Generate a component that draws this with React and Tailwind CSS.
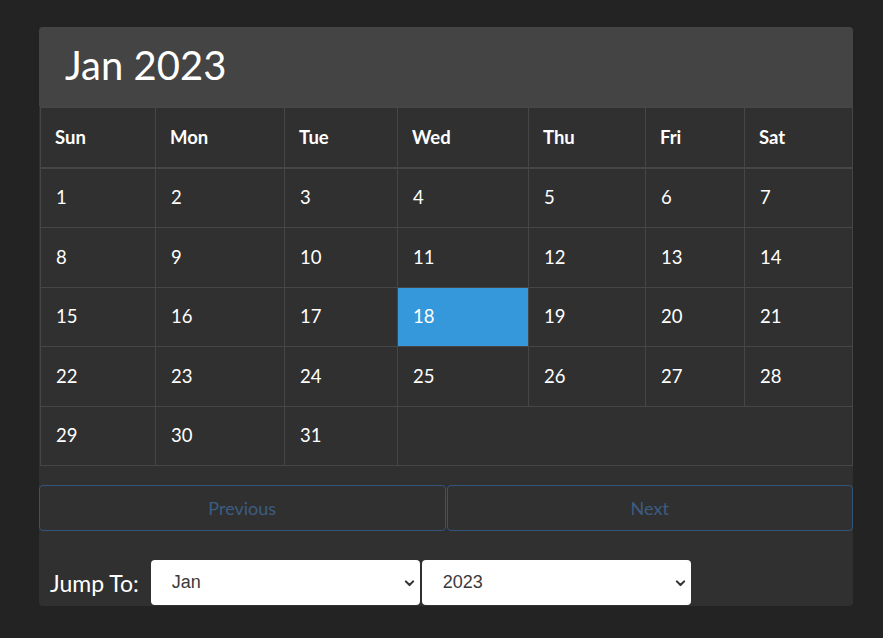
import { useState } from 'react';

const MONTHS = ['Jan', 'Feb', 'Mar', 'Apr', 'May', 'Jun', 'Jul', 'Aug', 'Sep', 'Oct', 'Nov', 'Dec'];
const DAYS = ['Sun', 'Mon', 'Tue', 'Wed', 'Thu', 'Fri', 'Sat'];
const WIDTHS = ['w-[115px]', 'w-[129px]', 'w-[113px]', 'w-[131px]', 'w-[117px]', 'w-[99px]', 'w-[108px]'];

function buildWeeks(month, year) {
  const first = new Date(year, month, 1).getDay();
  const total = new Date(year, month + 1, 0).getDate();
  const weeks = [];
  let week = Array(first).fill(null);
  for (let d = 1; d <= total; d++) {
    week.push(d);
    if (week.length === 7) {
      weeks.push(week);
      week = [];
    }
  }
  if (week.length) weeks.push(week);
  return weeks;
}

function Chevron() {
  return (
    <svg className="pointer-events-none absolute right-[4px] top-1/2 -translate-y-1/2" width="13" height="13" viewBox="0 0 16 16">
      <path d="M3.5 6l4.5 4.5 4.5-4.5" fill="none" stroke="#333" strokeWidth="2.6" strokeLinecap="round" strokeLinejoin="round" />
    </svg>
  );
}

export default function App() {
  const [month, setMonth] = useState(0);
  const [year, setYear] = useState(2023);
  const today = 18;
  const weeks = buildWeeks(month, year);

  return (
    <div className="min-h-[638px] bg-[#232323] pt-[27px] pl-[39px]" style={{ fontFamily: 'Lato, "Open Sans", sans-serif' }}>
      <div className="w-[814px] rounded-[4px] bg-[#303030] text-white">
        <div className="h-[79px] rounded-t-[4px] bg-[#444444] pl-[26px] pt-[14px] text-[40px] leading-[48px]">
          {MONTHS[month]} {year}
        </div>
        <div className="px-[1px]">
          <table className="w-[812px] border-collapse table-fixed text-[18.5px]">
            <thead>
              <tr className="h-[61px] border-y-2 border-[#464646]">
                {DAYS.map((d, i) => (
                  <th key={d} className={`${WIDTHS[i]} border-x border-[#464646] pl-[14px] text-left font-bold`}>{d}</th>
                ))}
              </tr>
            </thead>
            <tbody>
              {weeks.map((w, wi) => (
                <tr key={wi} className="h-[59.6px] border-b border-[#464646]">
                  {w.map((d, di) => (
                    <td
                      key={di}
                      className={`border-x border-[#464646] pl-[15px] ${d === today ? 'bg-[#3498db]' : ''}`}
                    >
                      {d}
                    </td>
                  ))}
                  {w.length < 7 && <td colSpan={7 - w.length} className="border-r border-[#464646]" />}
                </tr>
              ))}
            </tbody>
          </table>
        </div>
        <div className="mt-[19px] flex gap-[1px]">
          <button className="h-[46px] flex-1 rounded-[4px] border border-[#34557a] text-[18px] text-[#3c5d82]">Previous</button>
          <button className="h-[46px] flex-1 rounded-[4px] border border-[#34557a] text-[18px] text-[#3c5d82]">Next</button>
        </div>
        <div className="mt-[29px] flex items-center pb-[1px] pl-[11px]">
          <span className="mr-[12px] text-[23px]">Jump To:</span>
          <div className="relative w-[269px]">
            <select
              value={month}
              onChange={(e) => setMonth(Number(e.target.value))}
              className="h-[45px] w-full appearance-none rounded-[4px] bg-white pl-[21px] text-[18px] text-[#3a3a3a]"
              style={{ fontFamily: '"Liberation Sans", Arial, sans-serif' }}
            >
              {MONTHS.map((m, i) => (
                <option key={m} value={i}>{m}</option>
              ))}
            </select>
            <Chevron />
          </div>
          <div className="relative ml-[2px] w-[269px]">
            <select
              value={year}
              onChange={(e) => setYear(Number(e.target.value))}
              className="h-[45px] w-full appearance-none rounded-[4px] bg-white pl-[21px] text-[18px] text-[#3a3a3a]"
              style={{ fontFamily: '"Liberation Sans", Arial, sans-serif' }}
            >
              {[2020, 2021, 2022, 2023, 2024, 2025].map((y) => (
                <option key={y} value={y}>{y}</option>
              ))}
            </select>
            <Chevron />
          </div>
        </div>
      </div>
    </div>
  );
}
